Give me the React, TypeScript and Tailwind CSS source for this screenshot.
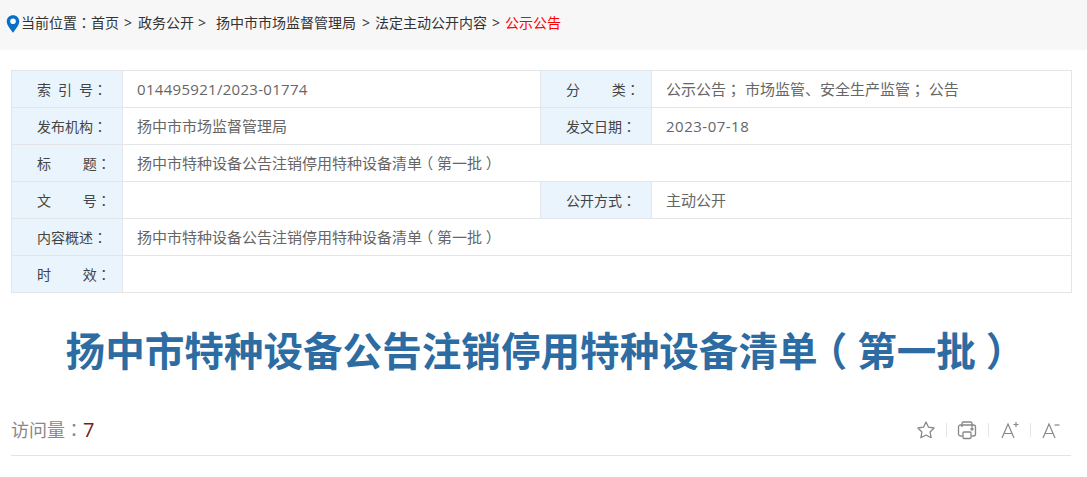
const base = { fontFamily: '"Open Sans", "Noto Sans CJK SC", sans-serif' };

// centred full-width punctuation comes from the TC cut
function P(props: { c: string }) {
    return <span style={{ fontFamily: '"Noto Sans CJK TC", sans-serif' }}>{props.c}</span>;
}

function Label(props: { text: string }) {
    return (
        <td className="w-[111px] h-[37px] border border-[#e3e5e8] bg-[#e9f4fd] pl-[25px] text-[14px] text-[#444] whitespace-pre">
            {props.text}
            <P c="：" />
        </td>
    );
}

function Value(props: { children?: React.ReactNode; span?: number }) {
    return (
        <td colSpan={props.span} className="h-[37px] border border-[#e3e5e8] pl-[14px] text-[15px] text-[#666] whitespace-pre">
            {props.children}
        </td>
    );
}

function Sep() {
    return <span className="w-px h-[14px] bg-[#e5e5e5]" />;
}

function Paren(props: { c: string }) {
    return <span className="inline-block px-[0.25em] [font-feature-settings:'halt']">{props.c}</span>;
}

function Noticename() {
    return (
        <>
            扬中市特种设备公告注销停用特种设备清单
            <Paren c="（" />
            第一批
            <Paren c="）" />
        </>
    );
}

export default function App() {
    return (
        <div className="w-[1087px] h-[477px] bg-white overflow-hidden" style={base}>
            <div className="flex items-center h-[50px] bg-[#f7f7f7] pl-[6px] pb-[6px] text-[14px] text-[#333] whitespace-pre">
                <svg width="14" height="20" viewBox="0 0 15 20" className="mt-[3px] mr-px">
                    <path d="M7.5 0.5C3.6 0.5 0.8 3.4 0.8 7.2c0 4.4 4.6 8.6 6.7 12.3 2.1-3.7 6.7-7.9 6.7-12.3C14.200 3.400 11.400 0.500 7.500 0.500z" fill="#0a6fc9" />
                    <circle cx="7.500" cy="7" r="3" fill="#fff" />
                </svg>
                <span>当前位置<P c="：" />首页</span>
                <span className="ml-[5px] mr-[6px]">&gt;</span>
                <span>政务公开</span>
                <span className="ml-[4px] mr-[10px]">&gt;</span>
                <span>扬中市市场监督管理局</span>
                <span className="ml-[6px] mr-[5px]">&gt;</span>
                <span>法定主动公开内容</span>
                <span className="ml-[5px] mr-[5px]">&gt;</span>
                <span className="text-[#f00]">公示公告</span>
            </div>

            <div className="px-[11px] pt-[20px]">
                <table className="w-[1060px] table-fixed border-collapse">
                    <colgroup>
                        <col className="w-[111px]" />
                        <col className="w-[418px]" />
                        <col className="w-[111px]" />
                        <col className="w-[420px]" />
                    </colgroup>
                    <tbody>
                        <tr>
                            <Label text={"索\u2002引\u2002号"} />
                            <Value><span className="tracking-[0.3px]">014495921/2023-01774</span></Value>
                            <Label text={"分\u2003\u2003 类"} />
                            <Value>
                                公示公告<P c="；" /> 市场监管、安全生产监管<P c="；" /> 公告
                            </Value>
                        </tr>
                        <tr>
                            <Label text="发布机构" />
                            <Value>扬中市市场监督管理局</Value>
                            <Label text="发文日期" />
                            <Value><span className="tracking-[0.5px]">2023-07-18</span></Value>
                        </tr>
                        <tr>
                            <Label text={"标\u2003\u2003 题"} />
                            <Value span={3}><Noticename /></Value>
                        </tr>
                        <tr>
                            <Label text={"文\u2003\u2003 号"} />
                            <Value />
                            <Label text="公开方式" />
                            <Value>主动公开</Value>
                        </tr>
                        <tr>
                            <Label text="内容概述" />
                            <Value span={3}><Noticename /></Value>
                        </tr>
                        <tr>
                            <Label text={"时\u2003\u2003 效"} />
                            <Value span={3} />
                        </tr>
                    </tbody>
                </table>

                <h1 className="mt-[34px] h-[48px] pr-[6px] text-center text-[39.6px] leading-[48px] font-bold text-[#2d6ca2] whitespace-nowrap">
                    <Noticename />
                </h1>

                <div className="flex items-center justify-between mt-[30px] w-[1060px] h-[51px] pb-[1px] border-b border-[#e3e3e3]">
                    <div className="text-[18px] text-[#888]">
                        访问量<P c="：" /><span className="text-[20px] text-[#7d1a1a]">7</span>
                    </div>
                    <div className="flex items-center gap-[10px] pr-[10px] text-[#888]">
                        <svg width="20" height="20" viewBox="0 0 20 20" fill="none" stroke="currentColor" strokeWidth="1.300" strokeLinejoin="round">
                            <path d="M10 2l2.500 5.200 5.600.8-4 4 1 5.700-5.100-2.700-5.100 2.700 1-5.700-4-4 5.600-.8z" />
                        </svg>
                        <Sep />
                        <svg width="20" height="20" viewBox="0 0 20 20" fill="none" stroke="currentColor" strokeWidth="1.300" strokeLinejoin="round">
                            <path d="M5 7V3.500A1.500 1.500 0 0 1 6.500 2h7A1.500 1.500 0 0 1 15 3.500V7" />
                            <path d="M5.500 16H3.500A2 2 0 0 1 1.500 14V7A2 2 0 0 1 3.500 5h13A2 2 0 0 1 18.500 7v7a2 2 0 0 1-2 2h-2" />
                            <rect x="6" y="12" width="8" height="6.500" rx="1" />
                            <circle cx="15" cy="9" r="1" />
                        </svg>
                        <span className="ml-[1px] w-px h-[14px] bg-[#e5e5e5]" />
                        <svg className="ml-[1px]" width="20" height="20" viewBox="0 0 20 20" fill="none" stroke="currentColor" strokeWidth="1.200">
                            <path d="M2 18L8 4l6 14M4 13.500h8" />
                            <path d="M13.500 4.500h5M16 2v5" />
                        </svg>
                        <Sep />
                        <svg width="20" height="20" viewBox="0 0 20 20" fill="none" stroke="currentColor" strokeWidth="1.200">
                            <path d="M2 18L8 4l6 14M4 13.500h8" />
                            <path d="M13.500 5h5" />
                        </svg>
                    </div>
                </div>
            </div>
        </div>
    );
}
